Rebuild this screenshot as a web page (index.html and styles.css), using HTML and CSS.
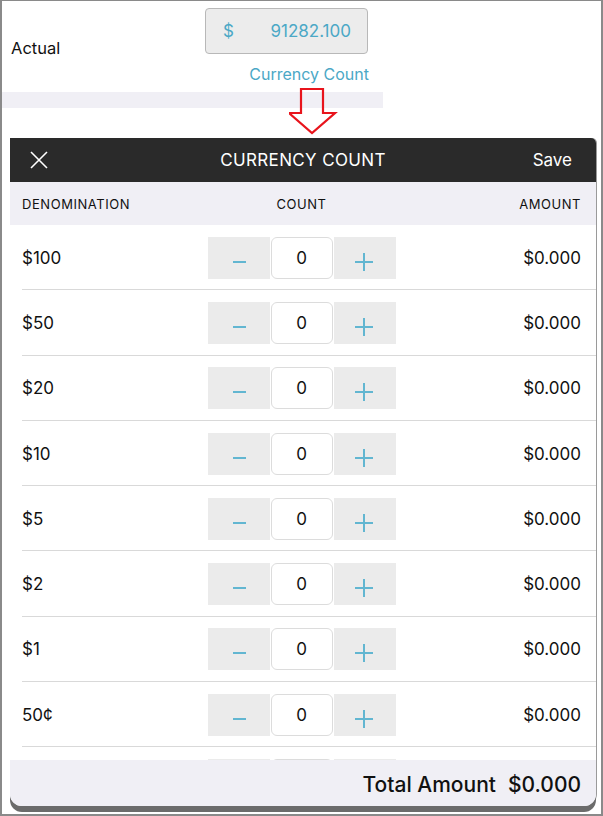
FILE: index.html
```html
<!DOCTYPE html>
<html>
<head>
<meta charset="utf-8">
<link rel="stylesheet" href="styles.css">
</head>
<body>
<div class="frame">
  <div class="top">
    <div class="actual-row">
      <span class="label">Actual</span>
      <div class="field"><span class="cur">$</span><span class="val">91282.100</span></div>
    </div>
    <div class="link-row"><span class="link">Currency Count</span></div>
    <div class="band"></div>
  </div>
  <svg class="arrow" width="50" height="50" viewBox="0 0 50 50">
    <polygon points="12,1 34,1 34,25 46,25 23,45 0,25 12,25" fill="none" stroke="#e8141c" stroke-width="2.2" stroke-linejoin="miter"/>
  </svg>
  <div class="modal">
    <div class="header">
      <svg class="close" width="18" height="18" viewBox="0 0 18 18"><path d="M1 1 L17 17 M17 1 L1 17" stroke="#fff" stroke-width="1.6" fill="none"/></svg>
      <span class="title">CURRENCY COUNT</span>
      <span class="save">Save</span>
    </div>
    <div class="colhead">
      <span class="c1">DENOMINATION</span>
      <span class="c2">COUNT</span>
      <span class="c3">AMOUNT</span>
    </div>
    <div class="list">
      <div class="row"><span class="den">$100</span><div class="stepper"><span class="btn minus"><i></i></span><span class="cnt">0</span><span class="btn plus"><i></i><b></b></span></div><span class="amt">$0.000</span></div>
      <div class="row"><span class="den">$50</span><div class="stepper"><span class="btn minus"><i></i></span><span class="cnt">0</span><span class="btn plus"><i></i><b></b></span></div><span class="amt">$0.000</span></div>
      <div class="row"><span class="den">$20</span><div class="stepper"><span class="btn minus"><i></i></span><span class="cnt">0</span><span class="btn plus"><i></i><b></b></span></div><span class="amt">$0.000</span></div>
      <div class="row"><span class="den">$10</span><div class="stepper"><span class="btn minus"><i></i></span><span class="cnt">0</span><span class="btn plus"><i></i><b></b></span></div><span class="amt">$0.000</span></div>
      <div class="row"><span class="den">$5</span><div class="stepper"><span class="btn minus"><i></i></span><span class="cnt">0</span><span class="btn plus"><i></i><b></b></span></div><span class="amt">$0.000</span></div>
      <div class="row"><span class="den">$2</span><div class="stepper"><span class="btn minus"><i></i></span><span class="cnt">0</span><span class="btn plus"><i></i><b></b></span></div><span class="amt">$0.000</span></div>
      <div class="row"><span class="den">$1</span><div class="stepper"><span class="btn minus"><i></i></span><span class="cnt">0</span><span class="btn plus"><i></i><b></b></span></div><span class="amt">$0.000</span></div>
      <div class="row"><span class="den">50¢</span><div class="stepper"><span class="btn minus"><i></i></span><span class="cnt">0</span><span class="btn plus"><i></i><b></b></span></div><span class="amt">$0.000</span></div>
      <div class="row"><span class="den"></span><div class="stepper"><span class="btn minus"></span><span class="cnt"></span><span class="btn plus"></span></div><span class="amt"></span></div>
    </div>
    <div class="footer"><span class="tl">Total Amount</span><span class="tv">$0.000</span></div>
  </div>
</div>
</body>
</html>
```
FILE: styles.css
```css
* { box-sizing: border-box; }
html, body { margin: 0; padding: 0; background: #fff; }
body { font-family: Inter, "Noto Sans", sans-serif; color: #111; }

.frame {
  position: relative;
  width: 603px;
  height: 816px;
  border: 2px solid #8a8a8a;
  border-top-width: 1px;
  overflow: hidden;
  background: #fff;
}

.top { width: 381px; }
.actual-row {
  display: flex;
  align-items: flex-start;
  padding-top: 7px;
  height: 55px;
}
.label {
  font-size: 16.5px;
  margin-left: 9px;
  margin-top: 30px;
  width: 194px;
}
.field {
  width: 163px;
  height: 46px;
  background: #ececec;
  border: 1px solid #b8b8b8;
  border-radius: 4px;
  display: flex;
  align-items: center;
  justify-content: space-between;
  padding: 0 16px 0 17px;
  color: #4ba8c6;
  font-size: 17px;
}
.link-row {
  display: flex;
  justify-content: flex-end;
  padding-right: 14px;
  height: 36px;
  align-items: center;
}
.link { color: #4ba8c6; font-size: 16px; }
.band { height: 16px; background: #f0eff5; }

.arrow { position: absolute; left: 287px; top: 87px; }

.modal {
  margin-left: 8px;
  margin-top: 30px;
  width: 586px;
  height: 668px;
  border-radius: 0 5px 12px 12px;
  box-shadow: 0 6px 0 #6b6b6b, 1px 0 0 #9a9a9a;
  background: #fff;
  overflow: hidden;
  display: flex;
  flex-direction: column;
}
.header {
  height: 44px;
  flex: none;
  background: #2a2a2a;
  display: flex;
  align-items: center;
  position: relative;
  color: #fff;
}
.close { margin-left: 20px; }
.title {
  position: absolute;
  left: 0; right: 0;
  text-align: center;
  font-size: 17px;
  letter-spacing: 0.35px;
}
.save { margin-left: auto; margin-right: 24px; font-size: 17px; }

.colhead {
  height: 43px;
  flex: none;
  background: #f0eff5;
  display: grid;
  grid-template-columns: 1fr auto 1fr;
  align-items: center;
  padding: 0 15px 0 12px;
  font-size: 13px;
  letter-spacing: 0.55px;
}
.c2 { text-align: center; }
.c3 { text-align: right; }

.list { flex: 1; overflow: hidden; }
.row {
  height: 65.3px;
  display: grid;
  grid-template-columns: 1fr auto 1fr;
  align-items: center;
  padding: 0 15px 0 12px;
  position: relative;
}
.row::after {
  content: "";
  position: absolute;
  left: 12px; right: 0; bottom: 0;
  height: 1px;
  background: #d9d9d9;
}
.den { font-size: 17px; }
.amt { font-size: 17px; text-align: right; }
.stepper { display: flex; height: 42px; }
.btn {
  width: 62px;
  height: 42px;
  background: #ebebeb;
  position: relative;
}
.btn i, .btn b {
  position: absolute;
  background: #62b6d1;
}
.minus i { width: 13px; height: 2px; left: 25px; top: 24px; }
.plus i { width: 18px; height: 2px; left: 21px; top: 24px; }
.plus b { width: 2px; height: 18px; left: 29px; top: 16px; }
.cnt {
  width: 62px;
  height: 42px;
  background: #fff;
  border: 1px solid #dcdcdc;
  border-radius: 6px;
  display: flex;
  align-items: center;
  justify-content: center;
  font-size: 17px;
  margin: 0 1px 0 0;
}
.stepper .minus { margin-right: 1px; }

.footer {
  height: 46px;
  flex: none;
  background: #f0eff5;
  display: flex;
  justify-content: flex-end;
  align-items: center;
  padding-right: 15px;
  padding-top: 2px;
  font-size: 21px;
  font-weight: 500;
  gap: 12px;
}
```
